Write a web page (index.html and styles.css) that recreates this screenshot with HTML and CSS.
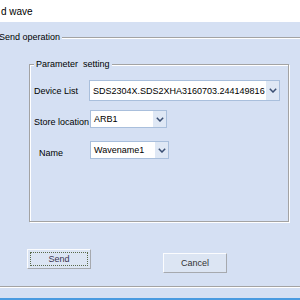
FILE: index.html
```html
<!DOCTYPE html>
<html>
<head>
<meta charset="utf-8">
<link rel="stylesheet" href="styles.css">
</head>
<body>
<div class="window">
  <div class="titlebar"><span class="title">d wave</span></div>
  <div class="client">
    <div class="group outer">
      <span class="legend outer-legend">Send operation</span>
      <div class="group inner">
        <span class="legend inner-legend">Parameter&nbsp; setting</span>
        <div class="row row-device">
          <span class="lbl">Device List</span>
          <div class="combo combo-device">
            <span class="val">SDS2304X.SDS2XHA3160703.244149816</span>
            <span class="arrow"><svg width="8" height="5" viewBox="0 0 8 5"><polyline points="0.8,0.8 4,4 7.2,0.8" fill="none" stroke="#3b4f73" stroke-width="1.5"/></svg></span>
          </div>
        </div>
        <div class="row row-store">
          <span class="lbl lbl-low">Store location</span>
          <div class="combo combo-store">
            <span class="val">ARB1</span>
            <span class="arrow"><svg width="8" height="5" viewBox="0 0 8 5"><polyline points="0.8,0.8 4,4 7.2,0.8" fill="none" stroke="#3b4f73" stroke-width="1.5"/></svg></span>
          </div>
        </div>
        <div class="row row-name">
          <span class="lbl lbl-low lbl-name">Name</span>
          <div class="combo combo-name">
            <span class="val">Wavename1</span>
            <span class="arrow"><svg width="8" height="5" viewBox="0 0 8 5"><polyline points="0.8,0.8 4,4 7.2,0.8" fill="none" stroke="#3b4f73" stroke-width="1.5"/></svg></span>
          </div>
        </div>
      </div>
      <div class="buttons">
        <button class="btn btn-send">Send</button>
        <button class="btn btn-cancel">Cancel</button>
      </div>
    </div>
  </div>
  <div class="bottom-edge"></div>
</div>
</body>
</html>
```
FILE: styles.css
```css
html, body {
  margin: 0;
  padding: 0;
  width: 300px;
  height: 300px;
  overflow: hidden;
}
body {
  background: #d5e0f3;
  font-family: "Liberation Sans", Arial, sans-serif;
  font-size: 9px;
  color: #000;
}
.window {
  width: 300px;
  height: 300px;
  overflow: hidden;
}
.titlebar {
  height: 22px;
  background: #fff;
  display: flex;
  align-items: center;
  padding-left: 1px;
  font-size: 10px;
}
.client {
  height: 276px;
  overflow: hidden;
}
.group {
  position: relative;
  border: 1px solid #a3a3a3;
  box-shadow: inset 1px 1px 0 #fff, 1px 1px 0 #fff;
}
.legend {
  position: absolute;
  top: -6px;
  background: #d5e0f3;
  padding: 0 2px;
  line-height: 11px;
  white-space: nowrap;
}
.outer {
  margin: 15px 0 0 -5px;
  width: 320px;
  height: 248px;
}
.outer-legend {
  left: 1px;
}
.inner {
  margin: 26px 0 0 33px;
  width: 258px;
  height: 141px;
  padding-top: 15px;
}
.inner-legend {
  left: 4px;
}
.row {
  display: flex;
  align-items: center;
}
.row-store {
  margin-top: 9px;
}
.row-name {
  margin-top: 13px;
}
.lbl {
  width: 55px;
  padding-left: 4px;
  white-space: nowrap;
}
.lbl-low {
  width: 56px;
  padding-top: 6px;
}
.lbl-name {
  width: 51px;
  padding-left: 9px;
}
.combo {
  display: flex;
  box-sizing: border-box;
  background: #fff;
  border: 1px solid #a9bfdc;
}
.combo-device {
  width: 191px;
  height: 21px;
}
.combo-store {
  width: 77px;
  height: 18px;
}
.combo-name {
  width: 79px;
  height: 18px;
}
.val {
  flex: 1;
  display: flex;
  align-items: center;
  padding-left: 3px;
  white-space: nowrap;
  overflow: hidden;
}
.arrow {
  width: 13px;
  background: #dfe8f5;
  display: flex;
  align-items: center;
  justify-content: center;
}
.buttons {
  display: flex;
  align-items: flex-start;
  margin: 27px 0 0 31px;
}
.btn {
  width: 64px;
  height: 20px;
  padding: 0;
  font: inherit;
  color: #333;
  background: #dce5f3;
  border: 1px solid;
  border-color: #fbfcfe #a6a9ae #a6a9ae #fbfcfe;
}
.btn-send {
  outline: 1px dotted #5a6a4a;
  outline-offset: -4px;
  color: #3a3350;
}
.btn-cancel {
  margin: 4px 0 0 72px;
}
.bottom-edge {
  height: 2px;
  background: #4a9be0;
}
```
